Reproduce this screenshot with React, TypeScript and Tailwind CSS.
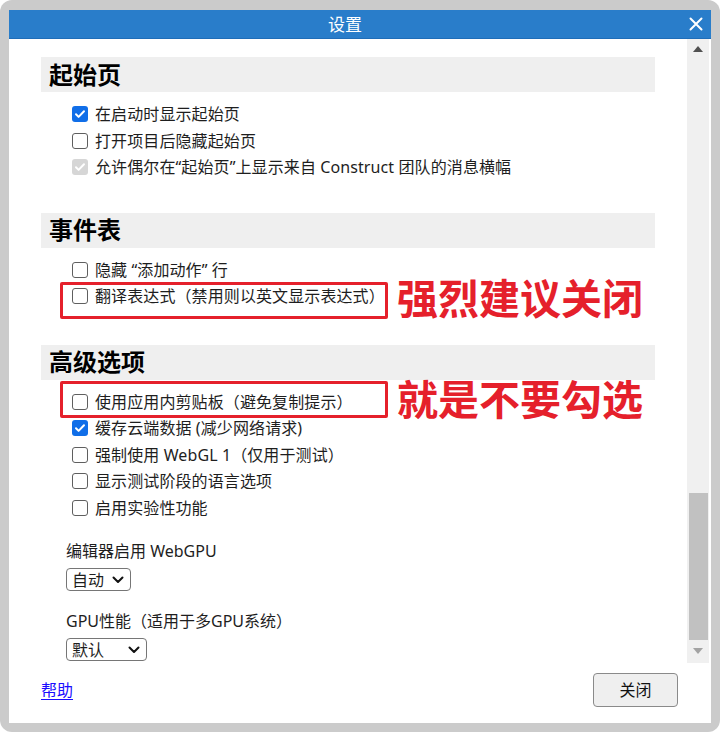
import { ReactNode } from 'react';

type BoxState = 'on' | 'off' | 'disabled';

const CheckBox = ({ state }: { state: BoxState }) => {
  if (state === 'off') {
    return (
      <span className="block h-[16px] w-[16px] shrink-0 rounded-[3px] border border-[#5f5f5f] bg-white" />
    );
  }
  return (
    <span
      className={`flex h-[16px] w-[16px] shrink-0 items-center justify-center rounded-[3px] ${
        state === 'on' ? 'bg-[#106ee8]' : 'bg-[#d6d6d6]'
      }`}
    >
      <svg width="12" height="12" viewBox="0 0 12 12" fill="none">
        <path
          d="M2 6.3l2.6 2.6L10 3.2"
          stroke="white"
          strokeWidth="2"
          strokeLinecap="round"
          strokeLinejoin="round"
        />
      </svg>
    </span>
  );
};

const Row = ({
  state = 'off',
  label,
  children,
}: {
  state?: BoxState;
  label: string;
  children?: ReactNode;
}) => (
  <div className="relative flex h-[26.5px] items-center gap-[7px] pl-[31px]">
    <CheckBox state={state} />
    <span className="whitespace-nowrap tracking-[0.1px]">{label}</span>
    {children}
  </div>
);

const SectionHeading = ({ title, className = '' }: { title: string; className?: string }) => (
  <div
    className={`flex h-[35px] items-center bg-[#efefef] pl-[8px] text-[24px] font-bold leading-none text-black ${className}`}
  >
    {title}
  </div>
);

const Note = ({ text, boxTop, textTop }: { text: string; boxTop: string; textTop: string }) => (
  <>
    <span
      className={`pointer-events-none absolute left-[19px] h-[37px] w-[328px] rounded-[2px] border-[3px] border-[#e5202b] ${boxTop}`}
    />
    <span
      className={`absolute left-[356px] whitespace-nowrap text-[41px] font-bold leading-[41px] text-[#e5202b] ${textTop}`}
    >
      {text}
    </span>
  </>
);

const Select = ({ value, width }: { value: string; width: string }) => (
  <div
    className={`flex h-[23px] items-center justify-between rounded-[4px] border border-[#767676] bg-white pl-[5px] pr-[6px] leading-none ${width}`}
  >
    <span>{value}</span>
    <svg width="12" height="8" viewBox="0 0 12 8" fill="none">
      <path d="M1.5 1.5L6 6l4.5-4.5" stroke="#111" strokeWidth="2" strokeLinecap="round" strokeLinejoin="round" />
    </svg>
  </div>
);

const ScrollBar = () => (
  <div className="flex w-[24px] shrink-0 bg-white pr-[2px]">
    <div className="flex flex-1 flex-col bg-[#f0f0f0]">
      <div className="flex h-[17px] items-center justify-center pt-[2px]">
        <svg width="10" height="6" viewBox="0 0 10 6">
          <path d="M5 0L10 6H0z" fill="#505050" />
        </svg>
      </div>
      <div className="flex-1" />
      <div className="ml-[2px] mr-[1px] h-[147px] bg-[#c1c1c1]" />
      <div className="flex h-[23px] items-center justify-center pb-[2px]">
        <svg width="10" height="6" viewBox="0 0 10 6">
          <path d="M0 0H10L5 6z" fill="#a3a3a3" />
        </svg>
      </div>
    </div>
  </div>
);

const App = () => {
  return (
    <div className="h-[732px] w-[720px] bg-white font-['Noto_Sans','Noto_Sans_CJK_SC',sans-serif] text-[16px] text-[#1e1e1e]">
      <div className="flex h-full flex-col rounded-[12px] bg-[#cbcbcb] px-[9px] pb-[9px] pt-[10px]">
        <div className="flex min-h-0 flex-1 flex-col bg-white">
          <div className="flex h-[29px] shrink-0 items-center border-b border-[#1f6db8] bg-[#297dca] text-white">
            <div className="flex-1 text-center text-[17px] leading-none">设置</div>
            <div className="flex w-[30px] items-center justify-center">
              <svg width="14" height="14" viewBox="0 0 14 14" fill="none">
                <path d="M1.5 1.5l11 11M12.5 1.5l-11 11" stroke="white" strokeWidth="2" strokeLinecap="round" />
              </svg>
            </div>
          </div>

          <div className="flex min-h-0 flex-1">
            <div className="flex-1 overflow-hidden px-[32px] pt-[18px] leading-[20px]">
              <SectionHeading title="起始页" />
              <div className="mt-[9px]">
                <Row state="on" label="在启动时显示起始页" />
                <Row label="打开项目后隐藏起始页" />
                <Row state="disabled" label="允许偶尔在“起始页”上显示来自 Construct 团队的消息横幅" />
              </div>

              <SectionHeading title="事件表" className="mt-[32px]" />
              <div className="mt-[9px]">
                <Row label="隐藏 “添加动作” 行" />
                <Row label="翻译表达式（禁用则以英文显示表达式）">
                  <Note text="强烈建议关闭" boxTop="top-[-1px]" textTop="top-[-5px]" />
                </Row>
              </div>

              <SectionHeading title="高级选项" className="mt-[35px]" />
              <div className="mt-[9px]">
                <Row label="使用应用内剪贴板（避免复制提示）">
                  <Note text="就是不要勾选" boxTop="top-[-8px]" textTop="top-[-10px]" />
                </Row>
                <Row state="on" label="缓存云端数据 (减少网络请求)" />
                <Row label="强制使用 WebGL 1（仅用于测试）" />
                <Row label="显示测试阶段的语言选项" />
                <Row label="启用实验性功能" />
              </div>

              <div className="mt-[18px] flex flex-col pl-[25px]">
                <div className="leading-[24px]">编辑器启用 WebGPU</div>
                <div className="mt-[5px]">
                  <Select value="自动" width="w-[65px]" />
                </div>
                <div className="mt-[18px] leading-[24px]">GPU性能（适用于多GPU系统）</div>
                <div className="mt-[5px]">
                  <Select value="默认" width="w-[81px]" />
                </div>
              </div>
            </div>
            <ScrollBar />
          </div>

          <div className="flex h-[60px] shrink-0 items-start justify-between pl-[32px] pr-[33px] pt-[10px]">
            <div className="flex h-[34px] items-center">
              <a href="#" className="text-[#1a0dff] underline underline-offset-[3px]">
                帮助
              </a>
            </div>
            <button className="flex h-[34px] w-[85px] items-center justify-center rounded-[4px] border border-[#8a8a8a] bg-[#efefef] text-[16px] text-[#111]">
              关闭
            </button>
          </div>
        </div>
      </div>
    </div>
  );
};

export default App;
